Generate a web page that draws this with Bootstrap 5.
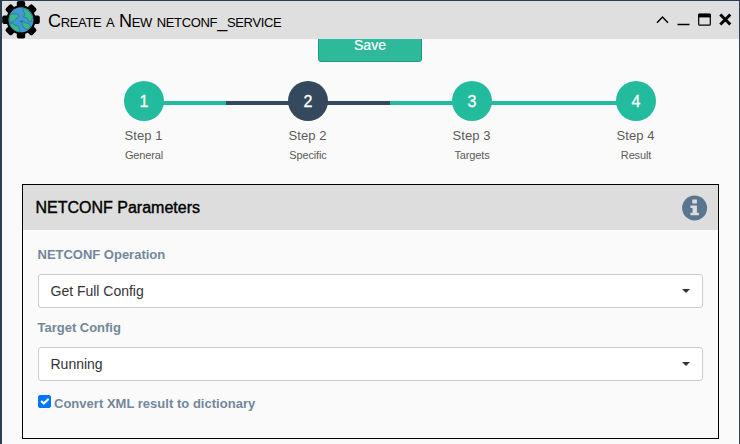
<!DOCTYPE html>
<html lang="en">
<head>
<meta charset="utf-8">
<meta name="viewport" content="width=device-width, initial-scale=1">
<title>Create a New netconf_service</title>
<link href="https://cdn.jsdelivr.net/npm/bootstrap@5.3.0/dist/css/bootstrap.min.css" rel="stylesheet">
<style>
  body { font-family: "Liberation Sans", Arial, sans-serif; font-size: 13px; color: #5a5a5a; background: #fafafa; }
  .window-panel { height: 444px; border: solid #2a3f54; border-width: 1px 1px 0 2px; }
  .title-bar { height: 38px; flex: none; background: #dfdfdf; color: #000; }
  .window-title { font-size: 18px; line-height: 38px; padding-top: 1px; font-variant: small-caps; margin-left: 8px; letter-spacing: -.33px; }
  .btn-save { width: 104px; height: 34px; margin: -11px 1px 0 0; padding: 0; font-size: 14px; line-height: 32px; color: #fff; background: #2eb99b; border: 1px solid #169f85; border-radius: 3px; -webkit-text-stroke: .2px #fff; }
  .steps { margin: 19px 20px 0 60px; width: 656px; }
  .step { width: 164px; --from: #23bb9d; --to: #23bb9d; }
  .step-track { height: 40px; background: linear-gradient(90deg, var(--from) 50%, var(--to) 50%) 0 20px / 100% 4px no-repeat; }
  .step:first-child .step-track { background-position: 100% 20px; background-size: 50% 4px; background-image: linear-gradient(#23bb9d, #23bb9d); }
  .step:last-child .step-track { background-size: 50% 4px; }
  .step.current .step-track { background-image: linear-gradient(#34495e, #34495e); }
  .step-number { width: 40px; height: 40px; background: #23bb9d; color: #fff; font-size: 16px; padding: 1px 0 0; -webkit-text-stroke: .3px #fff; }
  .current .step-number { background: #34495e; }
  .step-name { font-size: 13px; line-height: 20px; margin: 5px 1px 0 0; letter-spacing: .05px; }
  .step-note { font-size: 11px; line-height: 20px; margin-top: -1px; letter-spacing: -.15px; }
  .params { margin: 19px 20px 0 20px; height: 255px; border: 1px solid #000; }
  .params-head { height: 45px; background: #ddd; padding: 0 10px 0 12.5px; }
  .params-title { font-size: 16px; color: #000; -webkit-text-stroke: .4px #000; }
  .params-body { padding: 15px; }
  .field-label { font-size: 13px; line-height: 19px; font-weight: 700; color: #73879c; letter-spacing: -.01px; margin-left: -.5px; }
  .picker { height: 34px; margin: 10px 0; padding: 0 12px; font-size: 14px; color: #333; background: #fff; border: 1px solid #ccc; border-radius: 3px; letter-spacing: -.01px; }
  .picker > span { margin-left: -.5px; }
  .picker::after { border-top: 4px solid; border-left: 4px solid transparent; border-right: 4px solid transparent; margin: 0; }
  .option-row { margin-top: 13px; letter-spacing: .02px; }
  .option-check { width: 13px; height: 13px; margin: 0 3px 4px .5px; flex: none; border-radius: 2px !important; background-size: 14px 14px; }
  .option-check:checked { background-color: #0075ff; border-color: #0075ff; }
  svg { flex: none; display: block; }
</style>
<script src="https://cdn.jsdelivr.net/npm/bootstrap@5.3.0/dist/js/bootstrap.bundle.min.js"></script>
</head>
<body>
<div class="window-panel d-flex flex-column overflow-hidden">
  <header class="title-bar d-flex align-items-center">
    <svg width="38" height="38" viewBox="0 0 38 38" aria-hidden="true">
      <g fill="#000">
        <rect x="14.800" y="0" width="8.400" height="37.600" rx="2"/>
        <rect x="14.800" y="0" width="8.400" height="37.600" rx="2" transform="rotate(45 19 18.800)"/>
        <rect x="14.800" y="0" width="8.400" height="37.600" rx="2" transform="rotate(90 19 18.800)"/>
        <rect x="14.800" y="0" width="8.400" height="37.600" rx="2" transform="rotate(135 19 18.800)"/>
        <circle cx="19" cy="18.800" r="14.600"/>
      </g>
      <circle cx="19" cy="18.800" r="12.500" fill="#4298d5"/>
      <g fill="#39b88e" stroke="#1c5a70" stroke-width=".5">
        <path d="M7.600 14.500c1.400-1.500 3.500-1.800 6-1.500 2.400 0 3.400 1.200 3 2.800-.4 1.600-2.600 1.700-3.400 2.900-.8 1.200-1.400 2.200-3 2.300l-3.200-.2z"/>
        <path d="M20.500 7c4.500.8 8.800 4.500 10 9.500l-1.500 4.500-2.500-1-1.500-3-3.500-1 1.500-3.500-1.500-2z"/>
        <path d="M7.500 22.500l2.500-.5 3 2 3.500 1.500 1.500 4.500-1 .8C12 30.200 8.800 26.500 7.500 22.500z"/>
        <path d="M20 19.500l3.500 2.500 3.500.5 1.500 3-2.500 3-3.500-1-2-3.500z"/>
      </g>
      <circle cx="19" cy="20.500" r=".7" fill="#17465a"/>
    </svg>
    <div class="window-title flex-grow-1">Create a New netconf_service</div>
    <svg width="84" height="38" viewBox="0 0 84 38" fill="none" stroke="#000" aria-hidden="true">
      <path d="M2 21.700L7.500 16l5.500 5.700" stroke-width="1.500"/>
      <path d="M22.500 23.500h12" stroke-width="1.500"/>
      <rect x="43.700" y="13.200" width="11.600" height="11" rx="1" stroke-width="1.200"/>
      <path d="M43.200 14.600h12.600" stroke-width="3.600"/>
      <path d="M65.300 13.500l10 10M75.300 13.500l-10 10" stroke-width="3"/>
    </svg>
  </header>
  <main class="flex-grow-1 overflow-hidden">
    <div class="d-flex justify-content-center"><button class="btn btn-save" type="button">Save</button></div>
    <div class="steps d-flex text-center">
      <div class="step"><div class="step-track d-flex justify-content-center"><span class="step-number rounded-circle d-flex align-items-center justify-content-center">1</span></div><div class="step-name">Step 1</div><div class="step-note">General</div></div>
      <div class="step current"><div class="step-track d-flex justify-content-center"><span class="step-number rounded-circle d-flex align-items-center justify-content-center">2</span></div><div class="step-name">Step 2</div><div class="step-note">Specific</div></div>
      <div class="step"><div class="step-track d-flex justify-content-center"><span class="step-number rounded-circle d-flex align-items-center justify-content-center">3</span></div><div class="step-name">Step 3</div><div class="step-note">Targets</div></div>
      <div class="step"><div class="step-track d-flex justify-content-center"><span class="step-number rounded-circle d-flex align-items-center justify-content-center">4</span></div><div class="step-name">Step 4</div><div class="step-note">Result</div></div>
    </div>
    <section class="params">
      <div class="params-head d-flex align-items-center justify-content-between">
        <span class="params-title">NETCONF Parameters</span>
        <svg width="26" height="26" viewBox="0 0 26 26" aria-hidden="true">
          <circle cx="12.600" cy="13" r="12.500" fill="#5a7590"/>
          <path fill="#ddd" d="M10.300 4.500h4.600v4h-4.600zM8.500 10.500h6.400v7.200h2v2.600H8.500v-2.600h2.100v-4.600H8.500z"/>
        </svg>
      </div>
      <div class="params-body">
        <div class="field-label">NETCONF Operation</div>
        <div class="picker dropdown-toggle d-flex align-items-center justify-content-between" role="button"><span>Get Full Config</span></div>
        <div class="field-label">Target Config</div>
        <div class="picker dropdown-toggle d-flex align-items-center justify-content-between" role="button"><span>Running</span></div>
        <label class="field-label option-row d-flex align-items-center"><input class="form-check-input option-check" type="checkbox" checked>Convert XML result to dictionary</label>
      </div>
    </section>
  </main>
</div>
</body>
</html>
